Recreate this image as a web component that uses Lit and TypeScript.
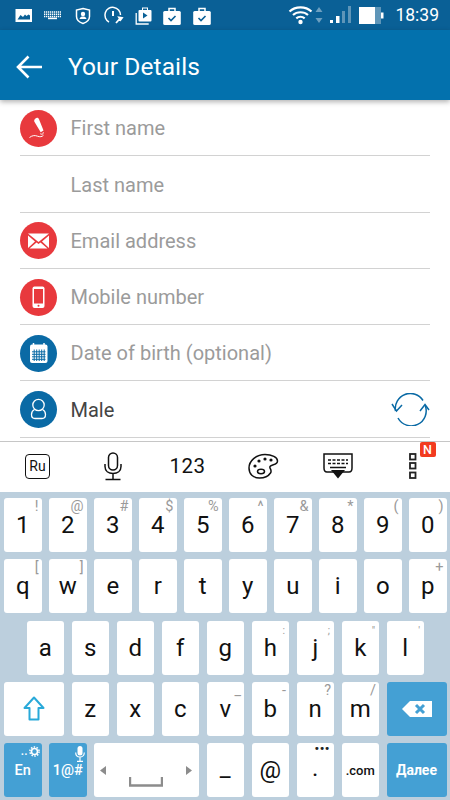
import { html, css, LitElement, TemplateResult } from 'lit';
import { customElement } from 'lit/decorators.js';

// status bar icons, all in a 24x24 box
const statusLeft: TemplateResult[] = [
  html`<svg viewBox="0 0 24 24"><rect x="3.5" y="6" width="16.5" height="13" fill="#fff"/><path d="M5.5 16.5l3-4.5 2.5 2 2-2.5 1.5 1.5 2-1.5 1.5 1v4z" fill="#0a6096"/></svg>`,
  html`<svg viewBox="0 0 24 24"><path d="M3 9h17M3 11.2h17M3 13.4h17" stroke="#fff" stroke-width="1.5" stroke-dasharray="1.3 .7" fill="none"/><rect x="7" y="14.6" width="9" height="1.6" fill="#fff"/></svg>`,
  html`<svg viewBox="0 0 24 24"><path d="M12 5.5l6.500 1.600v6.400c0 3.400-3 5.800-6.500 7-3.500-1.200-6.500-3.600-6.500-7V7.100z" fill="none" stroke="#fff" stroke-width="1.500"/><circle cx="12" cy="11" r="2.200" fill="#fff"/><path d="M8.500 16c.5-2 2-2.500 3.500-2.500s3 .5 3.500 2.500z" fill="#fff"/></svg>`,
  html`<svg viewBox="0 0 24 24"><path d="M8 19a7.800 7.800 0 1 1 11.500-7" fill="none" stroke="#fff" stroke-width="1.500"/><path d="M12 8v5" stroke="#fff" stroke-width="2"/><path d="M15 20l4-4.500M18 14.500l3 .5-1.500 2z" stroke="#fff" stroke-width="1.800" fill="#fff"/></svg>`,
  html`<svg viewBox="0 0 24 24"><rect x="7.500" y="7" width="13" height="11.500" rx="1" fill="#fff"/><rect x="11.500" y="5" width="5" height="3" fill="none" stroke="#fff"/><path d="M12 9.500l4.500 3-4.500 3z" fill="#0a6096"/><path d="M5.200 10v11h12.500" fill="none" stroke="#fff" stroke-width="1.300"/></svg>`,
  html`<svg viewBox="0 0 24 24"><rect x="3.200" y="8" width="17.600" height="14" rx="1.500" fill="#fff"/><path d="M9 8V5.500h6V8" fill="none" stroke="#fff" stroke-width="1.500"/><path d="M8.500 15l2.500 2.500 4.500-4.500" fill="none" stroke="#0a6096" stroke-width="1.600"/></svg>`,
  html`<svg viewBox="0 0 24 24"><rect x="3.200" y="8" width="17.600" height="14" rx="1.500" fill="#fff"/><path d="M9 8V5.500h6V8" fill="none" stroke="#fff" stroke-width="1.500"/><path d="M8.500 15l2.500 2.500 4.500-4.500" fill="none" stroke="#0a6096" stroke-width="1.600"/></svg>`,
];

const penIcon = html`<svg viewBox="0 0 37 37"><path d="M15.500 8.500c1.300-1.300 3-.6 3.500.7l4.500 11.300-2.800 1.800-6.300-10.500c-.5-1-.2-2.300 1.100-3.300z" fill="#fff"/><path d="M23.300 22.300c.2 2-1.500 2.300-3 1.500M9.500 27.500c3-2.300 5.500-2.300 8-1.300 2.500.9 4.500.7 6-1" fill="none" stroke="#fff" stroke-width="1"/></svg>`;
const mailIcon = html`<svg viewBox="0 0 37 37"><path d="M8 11.500h21l-10.500 8.500z" fill="#fff"/><path d="M8 13.500l7 6-7 6.500zM29 13.500l-7 6 7 6.500zM9.500 26.500l7-6 2 1.600 2-1.600 7 6z" fill="#fff"/></svg>`;
const phoneIcon = html`<svg viewBox="0 0 37 37"><rect x="12.500" y="7.500" width="12" height="21.500" rx="2" fill="#fff"/><rect x="14" y="10" width="9" height="14.500" fill="#e8393d"/><circle cx="18.500" cy="26.800" r="1" fill="#e8393d"/></svg>`;
const calendarIcon = html`<svg viewBox="0 0 37 37"><rect x="10" y="9.500" width="17.500" height="18.500" rx="2" fill="#fff"/><path d="M13.500 8v3M24 8v3" stroke="#fff" stroke-width="1.500"/><path d="M12 16.800h13.500M12 19.300h13.500M12 21.800h13.500M12 24.300h13.500M14.200 14.500v11.500M16.700 14.500v11.500M19.200 14.500v11.500M21.700 14.500v11.500M24.200 14.500v11.500" stroke="#0a6aa5" stroke-width="1"/></svg>`;
const personIcon = html`<svg viewBox="0 0 37 37"><circle cx="18.500" cy="14" r="5.700" fill="none" stroke="#fff" stroke-width="1.300"/><path d="M14.500 18.500c-2 1-3 3-3 5 0 2.500 1.500 4 3.500 4h7c2 0 3.500-1.500 3.500-4 0-2-1-4-3-5" fill="none" stroke="#fff" stroke-width="1.300"/></svg>`;

type Field = { label: string; icon?: TemplateResult; tone?: string; filled?: boolean; swap?: boolean };

const fields: Field[] = [
  { label: 'First name', icon: penIcon, tone: 'red' },
  { label: 'Last name' },
  { label: 'Email address', icon: mailIcon, tone: 'red' },
  { label: 'Mobile number', icon: phoneIcon, tone: 'red' },
  { label: 'Date of birth (optional)', icon: calendarIcon, tone: 'blue' },
  { label: 'Male', icon: personIcon, tone: 'blue', filled: true, swap: true },
];

const hints: Record<string, string> = {
  '1': '!', '2': '@', '3': '#', '4': '$', '5': '%', '6': '^', '7': '&', '8': '*', '9': '(', '0': ')',
  q: '[', w: ']', p: '+', h: ':', j: ';', k: '"', l: "'", v: '_', b: '-', n: '?', m: '/',
};
const tinyHints = 'hjkl';

const shiftIcon = html`<svg width="22" height="25" viewBox="0 0 22 25"><path d="M11 1.500L1.500 12h5v11.500h9V12h5z" fill="none" stroke="#29a9d9" stroke-width="2" stroke-linejoin="round"/></svg>`;
const backIcon = html`<svg width="32" height="18" viewBox="0 0 32 18"><path d="M9 1h22v16H9L1 9z" fill="#fff"/><path d="M15 5l8 8M23 5l-8 8" stroke="#44a0d4" stroke-width="3"/></svg>`;
const cogIcon = html`<svg width="11" height="11" viewBox="0 0 11 11"><circle cx="5.500" cy="5.500" r="3" fill="none" stroke="#fff" stroke-width="1.600"/><circle cx="5.500" cy="5.500" r="4.600" fill="none" stroke="#fff" stroke-width="1.500" stroke-dasharray="1.500 1.400"/></svg>`;
const miniMic = html`<svg width="10" height="16" viewBox="0 0 10 16"><rect x="2.500" y="0" width="5" height="9.500" rx="2.500" fill="#fff"/><path d="M.7 6.500c0 6 8.600 6 8.600 0M5 11.500V15M2 15.300h6" fill="none" stroke="#fff" stroke-width="1.200"/></svg>`;

@customElement('app-root')
export class AppRoot extends LitElement {
  static styles = css`
    :host {
      display: flex;
      flex-direction: column;
      width: 450px;
      height: 800px;
      overflow: hidden;
      background: #fff;
      font-family: Roboto, "Liberation Sans", sans-serif;
    }

    .status {
      display: flex;
      align-items: center;
      flex: 0 0 30px;
      background: #0a6096;
      padding-left: 11.5px;
      gap: 5.75px;
      color: #fff;
    }
    .status > svg { width: 24px; height: 24px; flex: none; }
    .status-right { display: flex; align-items: center; margin-left: auto; padding-right: 11px; }
    .gap2 { margin-left: 2px; }
    .gap7 { margin-left: 7px; }
    .time { font-size: 17.5px; margin-left: 11px; }

    .appbar {
      position: relative;
      z-index: 1;
      display: flex;
      align-items: center;
      flex: 0 0 70px;
      box-sizing: border-box;
      padding-top: 3px;
      background: #0371ad;
      color: #fff;
      box-shadow: 0 2px 5px rgba(0, 0, 0, .3);
    }
    .appbar svg { margin-left: 16px; flex: none; }
    .appbar span { font-size: 24.5px; margin-left: 25px; letter-spacing: .1px; }

    .form { flex: 0 0 336.5px; padding: 0 20px; }
    .row {
      display: flex;
      align-items: center;
      box-sizing: border-box;
      height: 56.25px;
      padding-top: 1.5px;
      border-bottom: 1.5px solid #d2d2d2;
    }
    .circle { width: 37px; height: 37px; border-radius: 50%; flex: none; margin-right: 13.5px; }
    .circle svg { display: block; }
    .red { background: #e8393d; }
    .blue { background: #0a6aa5; }
    .label { font-size: 20px; color: #9b9b9b; flex: 1; }
    .label.filled { color: #444; }

    .toolbar {
      display: grid;
      grid-template-columns: repeat(6, 75px);
      align-items: center;
      justify-items: center;
      position: relative;
      flex: 0 0 51px;
      box-sizing: border-box;
      margin-top: 3.5px;
      padding-bottom: 2px;
      border-top: 1.5px solid #c6c6c6;
      color: #111;
    }
    .ru {
      box-sizing: border-box;
      width: 25px;
      height: 25px;
      border: 1.5px solid #111;
      border-radius: 4px;
      font-size: 14px;
      display: flex;
      align-items: center;
      justify-content: center;
    }
    .num { font-size: 20.5px; letter-spacing: .4px; }
    .more { position: relative; display: flex; }
    .badge {
      position: absolute;
      left: 11px;
      top: -11px;
      width: 16px;
      height: 15px;
      border-radius: 2px;
      background: #f23b1f;
      color: #fff;
      font-size: 12.5px;
      font-weight: 500;
      display: flex;
      align-items: center;
      justify-content: center;
    }

    .keyboard {
      flex: 1;
      background: #bccfdd;
      padding: 6px 4px 0;
      display: flex;
      flex-direction: column;
      gap: 7.25px;
    }
    .keys { display: flex; gap: 7.5px; height: 54px; }
    .keys.indent { padding-left: 22.5px; }
    .key {
      position: relative;
      flex: 0 0 37.5px;
      box-sizing: border-box;
      background: #fff;
      border-radius: 3px;
      display: flex;
      align-items: center;
      justify-content: center;
      font-size: 24px;
      color: #111;
    }
    .key.wide { flex-basis: 60px; }
    .key.space { flex-basis: 105px; }
    .key.action { background: #44a0d4; color: #fff; font-weight: 500; font-size: 14.5px; }
    .key.action.bold { font-weight: 700; font-size: 14px; }
    .key.com { font-size: 13px; font-weight: 500; }
    .key.low { padding-bottom: 4px; }
    .hint {
      position: absolute;
      top: 1px;
      right: 3px;
      font-size: 14.5px;
      line-height: 16px;
      color: #9a9a9a;
    }
    .hint.tiny { font-size: 10.5px; right: 4px; top: 2px; }
    .corner { position: absolute; top: 3px; right: 2px; display: flex; align-items: flex-end; gap: 1px; color: #fff; font-size: 12px; line-height: 11px; }
    .dots { position: absolute; top: 0; right: 4px; font-size: 13px; line-height: 12px; font-weight: 700; letter-spacing: .5px; color: #222; }
    .tri { position: absolute; top: 23px; }
    .tri.l { left: 6px; }
    .tri.r { right: 7px; }
    .bar { position: absolute; left: 35px; top: 34px; }
  `;

  private key(k: string) {
    const hint = hints[k];
    return html`<div class="key">${k}${hint ? html`<span class="hint ${tinyHints.includes(k) ? 'tiny' : ''}">${hint}</span>` : ''}</div>`;
  }

  private renderStatus() {
    return html`
      <div class="status">
        ${statusLeft}
        <div class="status-right">
          <svg width="25" height="20" viewBox="0 0 25 20">
            <path d="M1.500 6.500c6-5.500 16-5.500 22 0M5 10c4-3.700 11-3.700 15 0M8.300 13.300c2.300-2 6-2 8.400 0" fill="none" stroke="#fff" stroke-width="2.200"/>
            <circle cx="12.500" cy="17" r="2.200" fill="#fff"/>
          </svg>
          <svg class="gap2" width="8" height="18" viewBox="0 0 8 18">
            <path d="M4 1l3.500 5h-7zM4 17L.5 12h7z" fill="#6c9fc0"/>
          </svg>
          <svg class="gap7" width="22" height="18" viewBox="0 0 22 18">
            <rect x="0" y="14" width="3" height="3" fill="#fff"/>
            <rect x="6" y="10" width="3.500" height="7" fill="#fff"/>
            <rect x="12" y="5" width="3" height="12" fill="#5e95b8"/>
            <rect x="18" y="0" width="3" height="17" fill="#5e95b8"/>
          </svg>
          <svg class="gap7" width="25" height="17" viewBox="0 0 25 17">
            <rect x="0" y="0" width="16" height="17" fill="#fff"/>
            <rect x="16" y="0" width="6" height="17" fill="#5e95b8"/>
            <rect x="22" y="5.500" width="2.500" height="6" fill="#fff"/>
          </svg>
          <span class="time">18:39</span>
        </div>
      </div>
    `;
  }

  private renderToolbar() {
    return html`
      <div class="toolbar">
        <div class="ru">Ru</div>
        <svg width="20" height="29" viewBox="0 0 20 29" fill="none" stroke="#111" stroke-width="1.500">
          <rect x="5.500" y="1" width="9" height="17" rx="4.500"/>
          <path d="M2 12v2.500c0 4.500 3.500 7 8 7s8-2.500 8-7V12M10 21.500V27M2.500 27.500h15"/>
        </svg>
        <div class="num">123</div>
        <svg width="32" height="26" viewBox="0 0 32 26" fill="none" stroke="#111" stroke-width="1.500">
          <path d="M2 15c0-7 7-13.500 16-13.500 7 0 12.500 3 12.500 6.500 0 4.500-6 3-7.500 5.500-1 2 2.500 3.500 .5 6.500-2 3-6.500 5-11 5C6 25 2 21 2 15z"/>
          <ellipse cx="14" cy="18.500" rx="3.500" ry="2.200"/>
          <g fill="#111" stroke="none">
            <circle cx="8" cy="13" r="1.600"/><circle cx="12" cy="8" r="1.600"/><circle cx="18" cy="6" r="1.600"/><circle cx="24" cy="7" r="1.600"/>
          </g>
        </svg>
        <svg width="30" height="26" viewBox="0 0 30 26" fill="none">
          <path d="M1 1h28v14c0 3-1 4-3 4H4c-2 0-3-1-3-4z" stroke="#111" stroke-width="1.500"/>
          <path d="M5 7h20M5 10.500h20" stroke="#111" stroke-width="1.500" stroke-dasharray="3 1.500"/>
          <path d="M7 14.500h16" stroke="#111" stroke-width="1.500"/>
          <path d="M8 17h14l-7 8.500z" fill="#111"/>
        </svg>
        <div class="more">
          <svg width="8" height="26" viewBox="0 0 8 26" fill="none" stroke="#222" stroke-width="1.800">
            <rect x="1" y="1" width="5.500" height="5.500"/><rect x="1" y="10" width="5.500" height="5.500"/><rect x="1" y="19.500" width="5.500" height="5.500"/>
          </svg>
          <span class="badge">N</span>
        </div>
      </div>
    `;
  }

  private renderKeyboard() {
    const row = (s: string) => [...s].map((k) => this.key(k));
    return html`
      <div class="keyboard">
        <div class="keys">${row('1234567890')}</div>
        <div class="keys">${row('qwertyuiop')}</div>
        <div class="keys indent">${row('asdfghjkl')}</div>
        <div class="keys">
          <div class="key wide">${shiftIcon}</div>
          ${row('zxcvbnm')}
          <div class="key wide action">${backIcon}</div>
        </div>
        <div class="keys">
          <div class="key action">En<span class="corner">..${cogIcon}</span></div>
          <div class="key action">1@#<span class="corner">${miniMic}</span></div>
          <div class="key space">
            <svg class="tri l" width="6" height="9" viewBox="0 0 6 9"><path d="M6 0v9L0 4.500z" fill="#8c8c8c"/></svg>
            <svg class="bar" width="34" height="10" viewBox="0 0 34 10"><path d="M1 0v8.500h32V0" fill="none" stroke="#8c8c8c" stroke-width="2.400"/></svg>
            <svg class="tri r" width="6" height="9" viewBox="0 0 6 9"><path d="M0 0v9l6-4.500z" fill="#8c8c8c"/></svg>
          </div>
          <div class="key low">_</div>
          <div class="key">@</div>
          <div class="key low">.<span class="dots">•••</span></div>
          <div class="key com">.com</div>
          <div class="key wide action bold">Далее</div>
        </div>
      </div>
    `;
  }

  render() {
    return html`
      ${this.renderStatus()}
      <div class="appbar">
        <svg width="27" height="24" viewBox="0 0 27 24" fill="none" stroke="#fff" stroke-width="2.600">
          <path d="M26 12H2M12.500 1.500L2 12l10.500 10.500"/>
        </svg>
        <span>Your Details</span>
      </div>
      <div class="form">
        ${fields.map((f) => html`
          <div class="row">
            ${f.icon
              ? html`<div class="circle ${f.tone}">${f.icon}</div>`
              : html`<div class="circle"></div>`}
            <span class="label ${f.filled ? 'filled' : ''}">${f.label}</span>
            ${f.swap
              ? html`<svg width="40" height="33" viewBox="0 0 40 33" fill="none" stroke="#0a6aa5" stroke-width="1.500">
                  <path d="M5.500 18A15 15 0 0 1 33 7.500M35 12A15 15 0 0 1 8 25"/>
                  <path d="M2 11l4.500 7 5.500-6M30 18l5-6.500 4 5.500"/>
                </svg>`
              : ''}
          </div>
        `)}
      </div>
      ${this.renderToolbar()}
      ${this.renderKeyboard()}
    `;
  }
}
